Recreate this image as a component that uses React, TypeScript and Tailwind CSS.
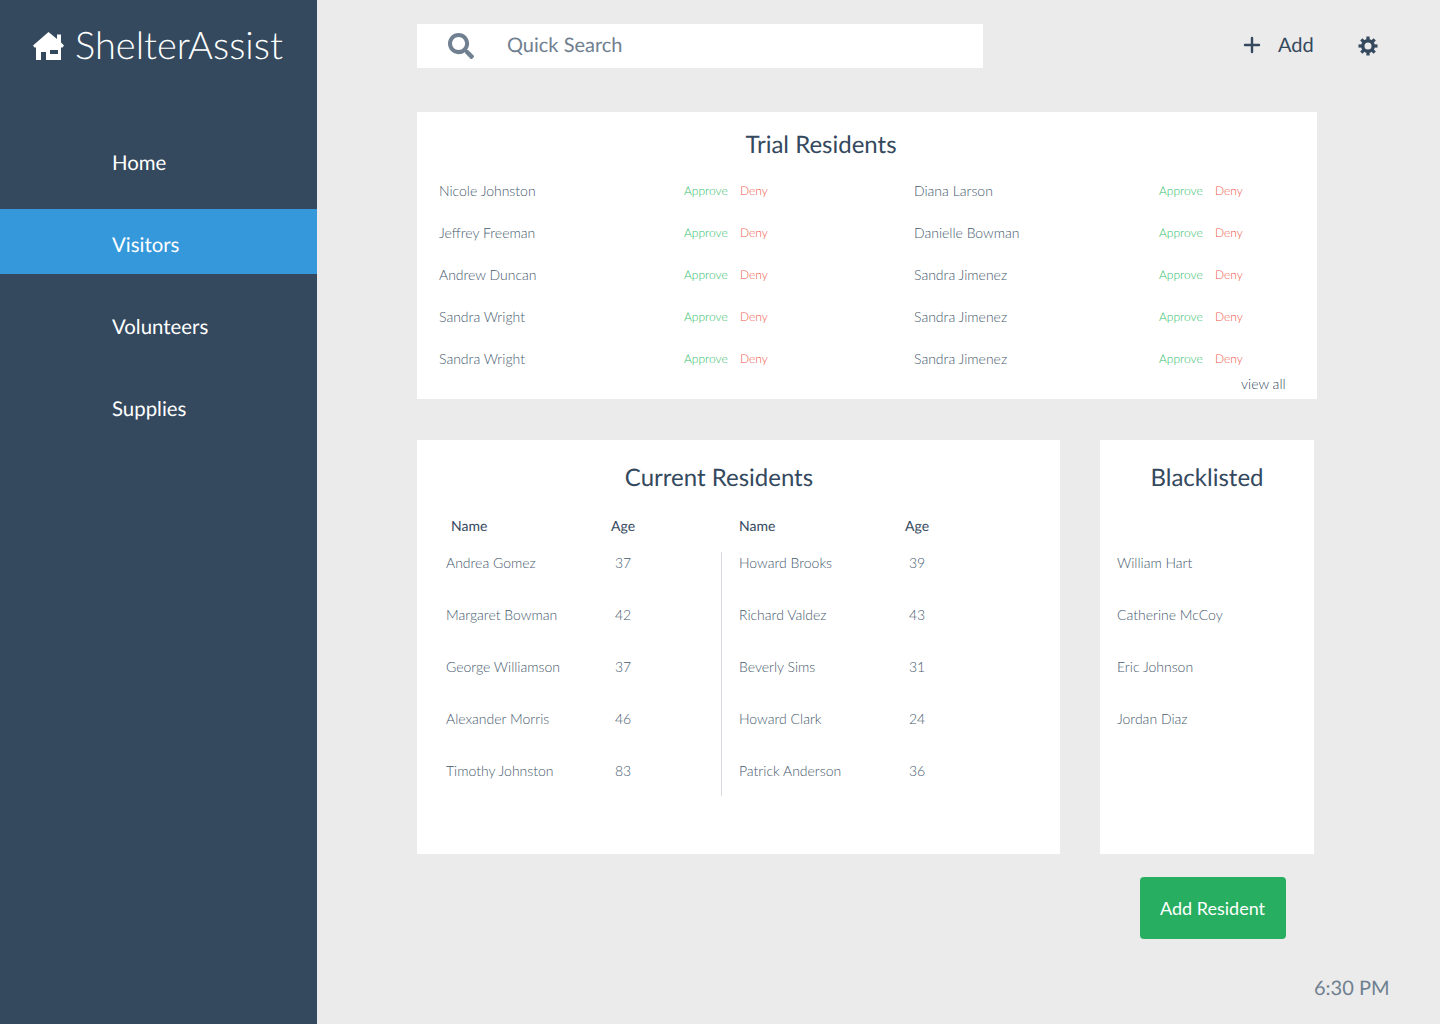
import React from 'react';
import { FaSearch } from 'react-icons/fa';
import { Plus } from 'lucide-react';

const navItems = ['Home', 'Visitors', 'Volunteers', 'Supplies'];

const trialLeft = ['Nicole Johnston', 'Jeffrey Freeman', 'Andrew Duncan', 'Sandra Wright', 'Sandra Wright'];
const trialRight = ['Diana Larson', 'Danielle Bowman', 'Sandra Jimenez', 'Sandra Jimenez', 'Sandra Jimenez'];

const currentLeft = [
  { name: 'Andrea Gomez', age: 37 },
  { name: 'Margaret Bowman', age: 42 },
  { name: 'George Williamson', age: 37 },
  { name: 'Alexander Morris', age: 46 },
  { name: 'Timothy Johnston', age: 83 },
];
const currentRight = [
  { name: 'Howard Brooks', age: 39 },
  { name: 'Richard Valdez', age: 43 },
  { name: 'Beverly Sims', age: 31 },
  { name: 'Howard Clark', age: 24 },
  { name: 'Patrick Anderson', age: 36 },
];

const blacklisted = ['William Hart', 'Catherine McCoy', 'Eric Johnson', 'Jordan Diaz'];

function HomeIcon() {
  return (
    <svg viewBox="0 0 31 28" className="h-[28px] w-[31px] shrink-0" fill="currentColor">
      <path
        fillRule="evenodd"
        d="M15.5 0 L24 7 V2.5 H28 V10.5 L31 13.5 L29.5 15.5 H28 V28 H13 V20 H8 V28 H3 V15.5 H1.5 L0 13.5 Z M17 18 V22 H25 V18 Z"
      />
    </svg>
  );
}

function GearIcon() {
  return (
    <svg viewBox="0 0 20 20" className="h-[20px] w-[20px] shrink-0" fill="none" stroke="currentColor">
      <circle cx="10" cy="10" r="5.2" strokeWidth="3.4" />
      <g strokeWidth="3.2">
        <path d="M10 0.5 V4" />
        <path d="M10 16 V19.5" />
        <path d="M0.5 10 H4" />
        <path d="M16 10 H19.5" />
        <path d="M3.3 3.3 L5.8 5.8" />
        <path d="M14.2 14.2 L16.7 16.7" />
        <path d="M3.3 16.7 L5.8 14.2" />
        <path d="M14.2 5.8 L16.7 3.3" />
      </g>
    </svg>
  );
}

function TrialRow({ name }: { name: string }) {
  return (
    <div className="flex h-[42px] w-[475px] items-center">
      <span className="w-[245px] pb-[2px] text-[14px] font-light text-[#465a6e]">{name}</span>
      <span className="w-[56px] text-[12px] font-light text-[#2bbd68]">Approve</span>
      <span className="text-[12px] font-light text-[#ef5a4c]">Deny</span>
    </div>
  );
}

function ResidentRow({ name, age, ageClass }: { name: string; age: number; ageClass: string }) {
  return (
    <div className="flex h-[52px] items-center text-[14px] font-light text-[#465a6e]">
      <span className={ageClass}>{name}</span>
      <span>{age}</span>
    </div>
  );
}

export default function App() {
  return (
    <div className="flex h-[1024px] w-[1440px] overflow-hidden bg-[#ebebeb] font-['Lato',sans-serif] text-[#34495e] antialiased [text-rendering:geometricPrecision]">
      <aside className="w-[317px] shrink-0 bg-[#34495e] text-white">
        <div className="flex h-[92px] items-center pl-[33px]">
          <HomeIcon />
          <span className="ml-[11px] pb-[2px] text-[38px] font-light leading-none">ShelterAssist</span>
        </div>
        <nav className="mt-[35px] flex flex-col gap-[17px]">
          {navItems.map((item) => (
            <div
              key={item}
              className={`flex h-[65px] items-center pl-[112px] pt-[7px] text-[20.4px] ${
                item === 'Visitors' ? 'bg-[#3498db]' : ''
              }`}
            >
              {item}
            </div>
          ))}
        </nav>
      </aside>

      <main className="flex-1 pl-[100px] pt-[24px]">
        <header className="flex h-[44px] items-center">
          <div className="flex h-[44px] w-[566px] items-center bg-white pl-[31px] text-[#708090]">
            <FaSearch className="h-[26px] w-[26px]" />
            <span className="ml-[33px] pb-[2px] text-[20px]">Quick Search</span>
          </div>
          <div className="ml-[257px] flex items-center">
            <Plus className="mb-[2px] h-[24px] w-[24px]" strokeWidth={2.4} />
            <span className="ml-[14px] pb-[2px] text-[20px]">Add</span>
          </div>
          <div className="ml-[44px]">
            <GearIcon />
          </div>
        </header>

        <section className="mt-[44px] h-[287px] w-[900px] bg-white pl-[22px]">
          <h2 className="w-[764px] pt-[17px] text-center text-[24px] leading-[32px]">Trial Residents</h2>
          <div className="mt-[9px] flex">
            <div>
              {trialLeft.map((name, i) => (
                <TrialRow key={i} name={name} />
              ))}
            </div>
            <div>
              {trialRight.map((name, i) => (
                <TrialRow key={i} name={name} />
              ))}
            </div>
          </div>
          <div className="mt-[-6px] pl-[802px] text-[14px] font-light leading-[20px]">view all</div>
        </section>

        <div className="mt-[41px] flex gap-[40px]">
          <section className="h-[414px] w-[643px] bg-white">
            <h2 className="w-[604px] pt-[22px] text-center text-[24px] leading-[32px]">Current Residents</h2>
            <div className="mt-[22px] flex text-[14px] leading-[20px]">
              <span className="ml-[34px] w-[160px]">Name</span>
              <span className="w-[128px]">Age</span>
              <span className="w-[166px]">Name</span>
              <span>Age</span>
            </div>
            <div className="flex">
              <div className="w-[304px] pl-[29px]">
                {currentLeft.map((r) => (
                  <ResidentRow key={r.name} name={r.name} age={r.age} ageClass="w-[169px]" />
                ))}
              </div>
              <div className="mt-[16px] h-[244px] w-px bg-[#d5d9dd]" />
              <div className="pl-[17px]">
                {currentRight.map((r) => (
                  <ResidentRow key={r.name} name={r.name} age={r.age} ageClass="w-[170px]" />
                ))}
              </div>
            </div>
          </section>

          <div>
            <section className="h-[414px] w-[214px] bg-white">
              <h2 className="pt-[22px] text-center text-[24px] leading-[32px]">Blacklisted</h2>
              <div className="mt-[42px] pl-[17px]">
                {blacklisted.map((name) => (
                  <div key={name} className="flex h-[52px] items-center text-[14px] font-light text-[#465a6e]">
                    {name}
                  </div>
                ))}
              </div>
            </section>
            <button className="ml-[40px] mt-[23px] h-[62px] w-[146px] rounded-[4px] bg-[#27ae60] pr-[1px] text-[18px] text-white">
              Add Resident
            </button>
          </div>
        </div>

        <div className="mt-[34px] pl-[897px] text-[20px] text-[#708090]">6:30 PM</div>
      </main>
    </div>
  );
}
